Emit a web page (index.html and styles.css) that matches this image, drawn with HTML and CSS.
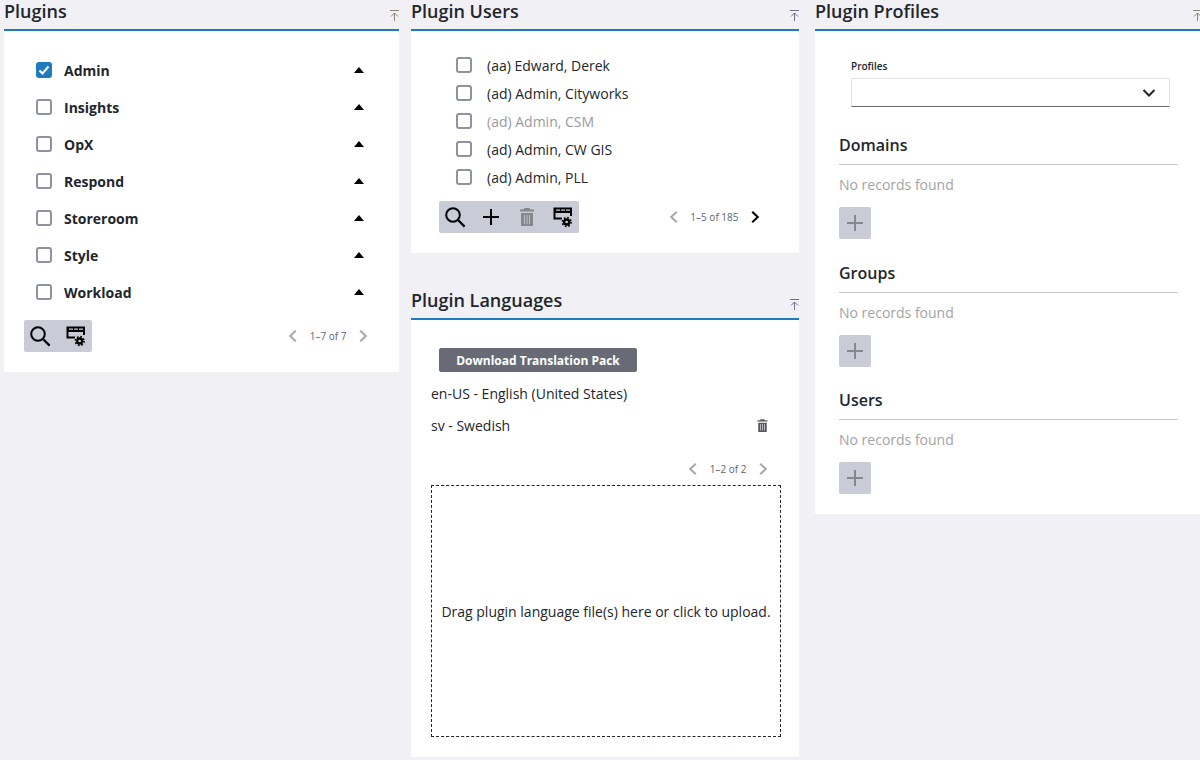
FILE: index.html
```html
<!DOCTYPE html>
<html lang="en">
<head>
<meta charset="utf-8">
<title>Plugins</title>
<link rel="stylesheet" href="styles.css">
</head>
<body>
<svg class="defs" width="0" height="0" aria-hidden="true">
  <defs>
    <symbol id="i-search" viewBox="0 0 24 24"><circle cx="10" cy="10" r="6.8" fill="none" stroke="currentColor" stroke-width="2"/><path d="M15 15l6.600 6.600" fill="none" stroke="currentColor" stroke-width="2.200"/></symbol>
    <symbol id="i-plus" viewBox="0 0 24 24"><path d="M12 4v16M4 12h16" fill="none" stroke="currentColor" stroke-width="2"/></symbol>
    <symbol id="i-trash" viewBox="0 0 24 24"><path fill="currentColor" fill-rule="evenodd" d="M9.500 3h5l1 1.500H19v2H5v-2h3.500zM6 8h12v13H6zM9 10v9h.8v-9zM11.600 10v9h.8v-9zM14.200 10v9h.8v-9z"/></symbol>
    <symbol id="i-grid" viewBox="0 0 24 24"><path fill="currentColor" fill-rule="evenodd" d="M2.500 2.500H21V11H19V8H4.500V12.500H11V14.500H2.500zM5 4.500V5.700H9V4.500zM10 4.500V5.700H14V4.500zM15 4.500V5.700H19V4.500z"/><circle cx="15.700" cy="17" r="2.500" fill="none" stroke="currentColor" stroke-width="2.400"/><circle cx="15.700" cy="17" r="4.400" fill="none" stroke="currentColor" stroke-width="1.600" stroke-dasharray="1.700 1.755"/></symbol>
    <symbol id="i-left" viewBox="0 0 12 12"><path d="M8.800 .8L3.200 6 8.800 11.200" fill="none" stroke="currentColor" stroke-width="2"/></symbol>
    <symbol id="i-right" viewBox="0 0 12 12"><path d="M3.200 .8L8.800 6 3.200 11.200" fill="none" stroke="currentColor" stroke-width="2"/></symbol>
    <symbol id="i-collapse" viewBox="0 0 9 11"><path d="M0 .5h9M4.500 11V3M1 6.500l3.500-3.500L8 6.500" fill="none" stroke="currentColor" stroke-width="1"/></symbol>
  </defs>
</svg>
<main class="page">
  <section class="col">
    <div class="panel">
      <header class="panel-head"><h2>Plugins</h2><svg class="collapse warm"><use href="#i-collapse"/></svg></header>
      <div class="panel-body plugins-body">
        <ul class="plugin-list">
          <li class="plugin"><span class="check checked"><svg viewBox="0 0 16 16"><path d="M3.500 8.500l3 3 6-7" fill="none" stroke="#fff" stroke-width="2"/></svg></span><span class="plugin-name">Admin</span><span class="caret"></span></li>
          <li class="plugin"><span class="check"></span><span class="plugin-name">Insights</span><span class="caret"></span></li>
          <li class="plugin"><span class="check"></span><span class="plugin-name">OpX</span><span class="caret"></span></li>
          <li class="plugin"><span class="check"></span><span class="plugin-name">Respond</span><span class="caret"></span></li>
          <li class="plugin"><span class="check"></span><span class="plugin-name">Storeroom</span><span class="caret"></span></li>
          <li class="plugin"><span class="check"></span><span class="plugin-name">Style</span><span class="caret"></span></li>
          <li class="plugin"><span class="check"></span><span class="plugin-name">Workload</span><span class="caret"></span></li>
        </ul>
        <div class="footer-row plugins-footer">
          <div class="toolbar">
            <span class="tool"><svg><use href="#i-search"/></svg></span>
            <span class="tool"><svg><use href="#i-grid"/></svg></span>
          </div>
          <div class="pager"><svg class="chev off"><use href="#i-left"/></svg><span class="count">1–7 of 7</span><svg class="chev off"><use href="#i-right"/></svg></div>
        </div>
      </div>
    </div>
  </section>

  <section class="col">
    <div class="panel">
      <header class="panel-head"><h2>Plugin Users</h2><svg class="collapse"><use href="#i-collapse"/></svg></header>
      <div class="panel-body users-body">
        <ul class="user-list">
          <li class="user"><span class="check"></span><span>(aa) Edward, Derek</span></li>
          <li class="user"><span class="check"></span><span>(ad) Admin, Cityworks</span></li>
          <li class="user muted"><span class="check"></span><span>(ad) Admin, CSM</span></li>
          <li class="user"><span class="check"></span><span>(ad) Admin, CW GIS</span></li>
          <li class="user"><span class="check"></span><span>(ad) Admin, PLL</span></li>
        </ul>
        <div class="footer-row users-footer">
          <div class="toolbar">
            <span class="tool"><svg><use href="#i-search"/></svg></span>
            <span class="tool"><svg><use href="#i-plus"/></svg></span>
            <span class="tool off"><svg><use href="#i-trash"/></svg></span>
            <span class="tool"><svg><use href="#i-grid"/></svg></span>
          </div>
          <div class="pager"><svg class="chev off"><use href="#i-left"/></svg><span class="count">1–5 of 185</span><svg class="chev on"><use href="#i-right"/></svg></div>
        </div>
      </div>
    </div>
    <div class="panel languages">
      <header class="panel-head"><h2>Plugin Languages</h2><svg class="collapse"><use href="#i-collapse"/></svg></header>
      <div class="panel-body lang-body">
        <button class="download" type="button">Download Translation Pack</button>
        <div class="lang-row"><span>en-US - English (United States)</span></div>
        <div class="lang-row"><span>sv - Swedish</span><svg class="lang-trash"><use href="#i-trash"/></svg></div>
        <div class="pager lang-pager"><svg class="chev off"><use href="#i-left"/></svg><span class="count">1–2 of 2</span><svg class="chev off"><use href="#i-right"/></svg></div>
        <div class="dropzone">Drag plugin language file(s) here or click to upload.</div>
      </div>
    </div>
  </section>

  <section class="col">
    <div class="panel">
      <header class="panel-head"><h2>Plugin Profiles</h2><svg class="collapse warm"><use href="#i-collapse"/></svg></header>
      <div class="panel-body profiles-body">
        <label class="field-label">Profiles</label>
        <div class="select"><svg viewBox="0 0 14 10"><path d="M1.500 2l5.500 5.500L12.500 2" fill="none" stroke="currentColor" stroke-width="2"/></svg></div>
        <div class="group">
          <h3>Domains</h3>
          <p class="empty">No records found</p>
          <span class="add"><svg><use href="#i-plus"/></svg></span>
        </div>
        <div class="group">
          <h3>Groups</h3>
          <p class="empty">No records found</p>
          <span class="add"><svg><use href="#i-plus"/></svg></span>
        </div>
        <div class="group">
          <h3>Users</h3>
          <p class="empty">No records found</p>
          <span class="add"><svg><use href="#i-plus"/></svg></span>
        </div>
      </div>
    </div>
  </section>
</main>
</body>
</html>
```

FILE: styles.css
```css
* { box-sizing: border-box; }
html, body { margin: 0; height: 760px; overflow: hidden; }
body { background: #f0f0f5; color: #22262c; font-family: "Open Sans", "Noto Sans", sans-serif; font-size: 14px; }
.defs { position: absolute; }
ul { list-style: none; margin: 0; padding: 0; }
h2, h3, p { margin: 0; }

.page { display: grid; grid-template-columns: 395px 388px 391px; column-gap: 12px; padding-left: 4px; align-items: start; width: 1210px; }
.page > .col:last-child { margin-left: 4px; }
.col { display: flex; flex-direction: column; }

.panel-head { height: 31px; border-bottom: 2px solid #1f7bbf; display: flex; align-items: flex-start; justify-content: space-between; }
.panel-head h2 { font-size: 18px; line-height: 24px; font-weight: 600; color: #22262c; margin-top: -1px; }
.collapse { width: 9px; height: 11px; margin-top: 10px; color: #6b7090; flex: none; }
.collapse.warm { color: #8a8378; }
.panel-body { background: #fff; }

.check { width: 16px; height: 16px; border: 2px solid #8f92a1; border-radius: 3px; background: #fff; flex: none; display: inline-flex; }
.check.checked { background: #1f7bbf; border: 0; }
.check svg { width: 16px; height: 16px; }

.plugins-body { height: 341px; padding: 21px 20px 0; }
.plugin { height: 37px; display: flex; align-items: center; padding-left: 12px; }
.plugin .check { margin-bottom: 2px; }
.plugin-name { font-weight: 700; font-size: 14px; margin-left: 12px; flex: 1; }
.caret { width: 0; height: 0; border-left: 5px solid transparent; border-right: 5px solid transparent; border-bottom: 6px solid #000; margin-right: 15px; margin-bottom: 2px; }

.footer-row { display: flex; align-items: center; justify-content: space-between; }
.toolbar { display: flex; gap: 4px; height: 32px; background: #c9ccd6; border-radius: 2px; }
.tool { width: 32px; height: 32px; display: flex; align-items: center; justify-content: center; color: #000; }
.tool.off { color: #85878c; }
.tool svg { width: 24px; height: 24px; flex: none; }
.plugins-footer { margin-top: 9px; padding-right: 10px; }

.pager { display: flex; align-items: center; color: #5f6470; }
.count { font-size: 10px; margin: 0 10.500px; }
.chev { width: 12px; height: 12px; flex: none; }
.chev.off { color: #a6a8ad; }
.chev.on { color: #000; }

.users-body { height: 222px; padding: 20px 28px 0; }
.user { height: 28px; display: flex; align-items: center; gap: 15px; padding-left: 17px; font-size: 14px; }
.user.muted { color: #9a9a9e; }
.users-footer { margin-top: 10px; padding-right: 10px; }

.languages { margin-top: 33px; }
.languages .panel-head { height: 34px; }
.languages .panel-head h2 { margin-top: 2px; }
.languages .collapse { margin-top: 13px; }
.lang-body { height: 437px; padding: 28px 18px 0 20px; display: flex; flex-direction: column; }
.download { align-self: flex-start; margin-left: 8px; width: 198px; height: 24px; border: 0; border-radius: 2px; background: #686b75; color: #fff; font-family: inherit; font-weight: 700; font-size: 12px; padding: 0; }
.lang-row { height: 32px; display: flex; align-items: center; justify-content: space-between; font-size: 14px; padding-right: 10px; flex: none; }
.download + .lang-row { margin-top: 5px; }
.lang-trash { width: 17px; height: 17px; color: #55585f; }
.lang-pager { align-self: flex-end; margin-top: 19px; margin-right: 12px; height: 18px; }
.dropzone { margin-top: 7px; width: 350px; height: 252px; border: 1px dashed #22262c; display: flex; align-items: center; justify-content: center; font-size: 14px; flex: none; }

.profiles-body { height: 483px; padding: 28px 24px 0; }
.field-label { display: block; font-size: 10px; font-weight: 600; line-height: 14px; margin-left: 12px; }
.select { margin: 5px 8px 0 12px; height: 29px; border: 1px solid #e2e2e6; border-bottom: 1px solid #66686c; border-radius: 2px 2px 0 0; display: flex; align-items: center; justify-content: flex-end; padding-right: 13px; color: #22262c; }
.select svg { width: 14px; height: 10px; }
.group { height: 127.500px; }
.select + .group { margin-top: 24px; }
.group h3 { font-size: 16px; font-weight: 600; line-height: 28px; height: 34px; border-bottom: 1px solid #c8c8c8; }
.empty { color: #a3a3a6; font-size: 14px; line-height: 20px; margin-top: 10px; }
.add { display: flex; align-items: center; justify-content: center; width: 32px; height: 32px; margin-top: 12px; background: #c9ccd6; border-radius: 2px; color: #85878c; }
.add svg { width: 24px; height: 24px; }
```
